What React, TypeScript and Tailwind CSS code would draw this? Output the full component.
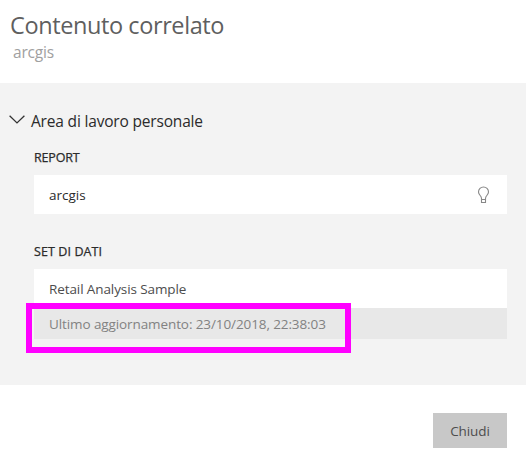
export default function App() {
  return (
    <div className="flex h-[460px] w-[526px] flex-col bg-white font-['Open_Sans','Noto_Sans',sans-serif] text-[#2b2b2b]">
      <header className="h-[83px] pt-[9px]">
        <h1 className="ml-[10px] h-8 whitespace-nowrap text-[23.5px] leading-8 tracking-[-0.4px] text-[#5f5f5f]">
          Contenuto correlato
        </h1>
        <p className="mt-px ml-[13px] whitespace-nowrap text-[15.5px] leading-5 tracking-[-0.2px] text-[#a0a0a0]">arcgis</p>
      </header>

      <main className="h-[302px] bg-[#f3f3f3] pr-[19px] pl-[34px] pt-[27px]">
        <div className="-ml-[25px] flex h-5 items-center">
          <svg width="16" height="10" viewBox="0 0 16 10" fill="none" stroke="#333" strokeWidth="1.3">
            <path d="M0.6 0.7L8 7.9L15.4 0.7" />
          </svg>
          <span className="ml-[6px] whitespace-nowrap pt-px text-[15.5px] leading-5 tracking-[-0.18px]">Area di lavoro personale</span>
        </div>

        <h2 className="mt-[18px] h-5 whitespace-nowrap text-[12.5px] leading-5 font-medium tracking-[-0.15px] [-webkit-text-stroke:0.25px_#2b2b2b]">REPORT</h2>
        <div className="mt-[7px] flex h-[39px] items-center justify-between bg-white pr-[17px] pl-[15px]">
          <span className="text-[13.5px] leading-5 tracking-[0px]">arcgis</span>
          <svg width="13" height="18" viewBox="0 0 13 18" fill="none" stroke="#888" strokeWidth="1.1">
            <path d="M4.5 12.5C4.5 9.5 1.5 9 1.5 6A5 5 0 0 1 11.5 6C11.5 9 8.5 9.5 8.5 12.5V16.5H4.5V13.5H8.5M4.5 12.5V13.5" />
          </svg>
        </div>

        <h2 className="mt-[28px] h-5 whitespace-nowrap text-[12.5px] leading-5 font-medium tracking-[0.1px] [-webkit-text-stroke:0.25px_#2b2b2b]">SET DI DATI</h2>
        <div className="relative mt-[7px]">
          <div className="flex h-[39px] items-center bg-white pt-0.5 pl-[15px] text-[13.5px] tracking-[-0.1px] text-[#4d4d4d]">
            Retail Analysis Sample
          </div>
          <div className="flex h-[31px] items-center bg-[#e8e8e8] pt-0.5 pl-[15px] text-[13.5px] tracking-[-0.1px] text-[#828282]">
            Ultimo aggiornamento: 23/10/2018, 22:38:03
          </div>
          <div className="absolute top-[34px] -left-2 h-[50px] w-[325px] border-6 border-[#ff00ff]" />
        </div>
      </main>

      <footer className="flex justify-end pt-7 pr-[19px]">
        <button className="h-[35px] w-[74px] bg-[#c8c8c8] pt-0.5 text-[13.5px] tracking-[-0.1px] text-[#4d4d4d]">Chiudi</button>
      </footer>
    </div>
  );
}
